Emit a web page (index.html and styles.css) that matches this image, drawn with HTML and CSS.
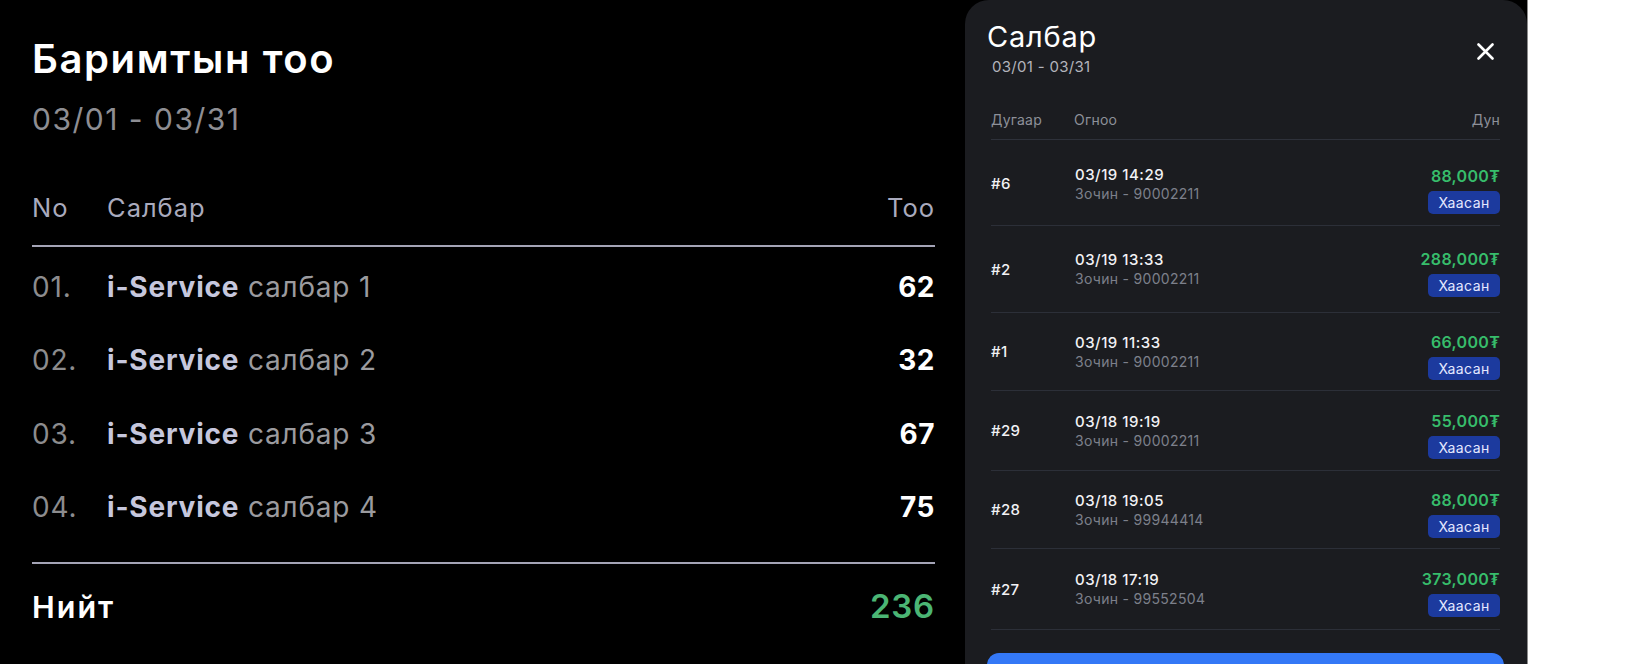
FILE: index.html
```html
<!DOCTYPE html>
<html lang="mn">
<head>
<meta charset="utf-8">
<title>Баримтын тоо</title>
<link rel="stylesheet" href="styles.css">
</head>
<body>
<div class="screen">
  <section class="report">
    <h1 class="report-title">Баримтын тоо</h1>
    <div class="report-range">03/01 - 03/31</div>
    <div class="report-head">
      <span class="col-no">No</span>
      <span class="col-name">Салбар</span>
      <span class="col-count">Тоо</span>
    </div>
    <div class="report-rows">
      <div class="report-row"><span class="col-no">01.</span><span class="col-name"><b class="brand">i-Service</b> салбар 1</span><span class="col-count">62</span></div>
      <div class="report-row"><span class="col-no">02.</span><span class="col-name"><b class="brand">i-Service</b> салбар 2</span><span class="col-count">32</span></div>
      <div class="report-row"><span class="col-no">03.</span><span class="col-name"><b class="brand">i-Service</b> салбар 3</span><span class="col-count">67</span></div>
      <div class="report-row"><span class="col-no">04.</span><span class="col-name"><b class="brand">i-Service</b> салбар 4</span><span class="col-count">75</span></div>
    </div>
    <div class="report-total">
      <span class="total-label">Нийт</span>
      <span class="total-value">236</span>
    </div>
  </section>

  <aside class="sheet">
    <div class="sheet-top">
      <div>
        <h2 class="sheet-title">Салбар</h2>
        <div class="sheet-range">03/01 - 03/31</div>
      </div>
      <button class="close" aria-label="close">
        <svg width="17" height="17" viewBox="0 0 17 17"><path d="M1.5 1.5 L15.5 15.5 M15.5 1.5 L1.5 15.5" stroke="#fff" stroke-width="2.6" stroke-linecap="round" fill="none"/></svg>
      </button>
    </div>
    <div class="sheet-head">
      <span class="s-no">Дугаар</span>
      <span class="s-date">Огноо</span>
      <span class="s-amt">Дун</span>
    </div>
    <div class="sheet-row first">
      <span class="s-no">#6</span>
      <div class="s-date"><div class="s-time">03/19 14:29</div><div class="s-guest">Зочин - 90002211</div></div>
      <div class="s-amt"><div class="amount">88,000₮</div><span class="badge">Хаасан</span></div>
    </div>
    <div class="sheet-row tall">
      <span class="s-no">#2</span>
      <div class="s-date"><div class="s-time">03/19 13:33</div><div class="s-guest">Зочин - 90002211</div></div>
      <div class="s-amt"><div class="amount">288,000₮</div><span class="badge">Хаасан</span></div>
    </div>
    <div class="sheet-row short">
      <span class="s-no">#1</span>
      <div class="s-date"><div class="s-time">03/19 11:33</div><div class="s-guest">Зочин - 90002211</div></div>
      <div class="s-amt"><div class="amount">66,000₮</div><span class="badge">Хаасан</span></div>
    </div>
    <div class="sheet-row">
      <span class="s-no">#29</span>
      <div class="s-date"><div class="s-time">03/18 19:19</div><div class="s-guest">Зочин - 90002211</div></div>
      <div class="s-amt"><div class="amount">55,000₮</div><span class="badge">Хаасан</span></div>
    </div>
    <div class="sheet-row short">
      <span class="s-no">#28</span>
      <div class="s-date"><div class="s-time">03/18 19:05</div><div class="s-guest">Зочин - 99944414</div></div>
      <div class="s-amt"><div class="amount">88,000₮</div><span class="badge">Хаасан</span></div>
    </div>
    <div class="sheet-row last">
      <span class="s-no">#27</span>
      <div class="s-date"><div class="s-time">03/18 17:19</div><div class="s-guest">Зочин - 99552504</div></div>
      <div class="s-amt"><div class="amount">373,000₮</div><span class="badge">Хаасан</span></div>
    </div>
    <div class="sheet-button" role="button"></div>
  </aside>
</div>
</body>
</html>
```

FILE: styles.css
```css
* { box-sizing: border-box; }

html, body {
  margin: 0;
  padding: 0;
  background: #ffffff;
}

body {
  font-family: Inter, "Noto Sans", "DejaVu Sans", sans-serif;
  width: 1640px;
  height: 664px;
  overflow: hidden;
}

.screen {
  width: 1528px;
  height: 664px;
  background: #000000;
  display: flex;
  overflow: hidden;
  border-right: 1px solid #8c8c8c;
}

/* ---------- left report ---------- */
.report {
  width: 965px;
  flex: none;
  padding: 35px 30px 0 32px;
  color: #fff;
}

.report-title {
  margin: 0;
  font-size: 40px;
  line-height: 48px;
  font-weight: 600;
  letter-spacing: 1.6px;
  color: #ffffff;
}

.report-range {
  margin-top: 18px;
  font-size: 30px;
  line-height: 36px;
  letter-spacing: 1.5px;
  color: #8e8e93;
}

.report-head {
  display: flex;
  align-items: baseline;
  margin-top: 56px;
  padding-bottom: 22px;
  border-bottom: 2px solid #a4a4b6;
  font-size: 25.5px;
  line-height: 30px;
  letter-spacing: 1px;
  color: #a9aabd;
}

.col-no { width: 75px; flex: none; }
.col-name { flex: 1; }
.col-count { flex: none; text-align: right; }

.report-rows {
  padding-top: 3px;
  padding-bottom: 18px;
  border-bottom: 2px solid #a4a4b6;
}

.report-row {
  display: flex;
  align-items: center;
  height: 73.5px;
  font-size: 28px;
  line-height: 34px;
  letter-spacing: 0.8px;
}

.report-row .col-no { color: #8c8c8e; }
.report-row .col-name { color: #9b9b9f; }
.report-row .brand { font-weight: 700; color: #c6c7dd; }
.report-row .col-count { font-weight: 700; color: #ffffff; letter-spacing: 0.5px; }

.report-total {
  display: flex;
  justify-content: space-between;
  align-items: baseline;
  padding-top: 24px;
}

.total-label {
  font-size: 30.5px;
  line-height: 36px;
  font-weight: 600;
  letter-spacing: 2px;
  color: #ffffff;
}

.total-value {
  font-size: 33px;
  line-height: 36px;
  font-weight: 600;
  letter-spacing: 0.8px;
  color: #4bb574;
}

/* ---------- right sheet ---------- */
.sheet {
  width: 562px;
  flex: none;
  background: #1b1c20;
  border-radius: 24px 24px 0 0;
  padding: 19px 27px 0 26px;
  display: flex;
  flex-direction: column;
}

.sheet-top {
  display: flex;
  justify-content: space-between;
  align-items: flex-start;
  margin-left: -4px;
}

.sheet-title {
  margin: 0;
  font-size: 29px;
  line-height: 35px;
  font-weight: 400;
  letter-spacing: 0.8px;
  color: #ffffff;
}

.sheet-range {
  margin-top: 4px;
  margin-left: 5px;
  font-size: 15px;
  line-height: 18px;
  letter-spacing: 0.3px;
  color: #b3b4bc;
}

.close {
  margin: 24px 6px 0 0;
  padding: 0;
  border: 0;
  background: transparent;
  width: 17px;
  height: 17px;
  display: block;
}
.close svg { display: block; }

.sheet-head {
  display: flex;
  align-items: baseline;
  margin-top: 35px;
  padding-bottom: 10px;
  border-bottom: 1px solid #2e313a;
  font-size: 14px;
  line-height: 18px;
  letter-spacing: 0.2px;
  color: #8d9099;
}

.s-no { width: 83px; flex: none; }
.s-date { flex: 1; }
.s-amt { flex: none; text-align: right; }

.sheet-row {
  display: flex;
  align-items: center;
  height: 80px;
  border-bottom: 1px solid #2c2f38;
  flex: none;
}
.sheet-row.first { height: 86px; padding-top: 2px; }
.sheet-row.tall { height: 87px; }
.sheet-row.short { height: 78px; }
.sheet-row.last { height: 81px; }

.sheet-row .s-no {
  font-size: 15px;
  font-weight: 500;
  letter-spacing: 0.3px;
  color: #f2f2f5;
}

.s-time {
  font-size: 15px;
  line-height: 19px;
  font-weight: 500;
  letter-spacing: 0.5px;
  color: #f2f2f5;
  padding-left: 1px;
}

.s-guest {
  font-size: 14px;
  line-height: 19px;
  color: #7d808b;
  letter-spacing: 0.3px;
  padding-left: 1px;
}

.sheet-row .s-amt {
  display: flex;
  flex-direction: column;
  align-items: flex-end;
  gap: 5px;
  padding-top: 9px;
}
.sheet-row.first .s-amt { padding-top: 13px; }

.amount {
  font-size: 16px;
  line-height: 19px;
  font-weight: 600;
  letter-spacing: 0.3px;
  color: #37bd6b;
}

.badge {
  display: block;
  width: 72px;
  height: 23px;
  line-height: 23px;
  text-align: center;
  border-radius: 5px;
  background: #1c3a9e;
  color: #e4e8ff;
  font-size: 14px;
  letter-spacing: 0.4px;
}

.sheet-button {
  margin: 23px -4px 0 -4px;
  height: 50px;
  flex: none;
  border-radius: 12px;
  background: #3478f6;
}
```
